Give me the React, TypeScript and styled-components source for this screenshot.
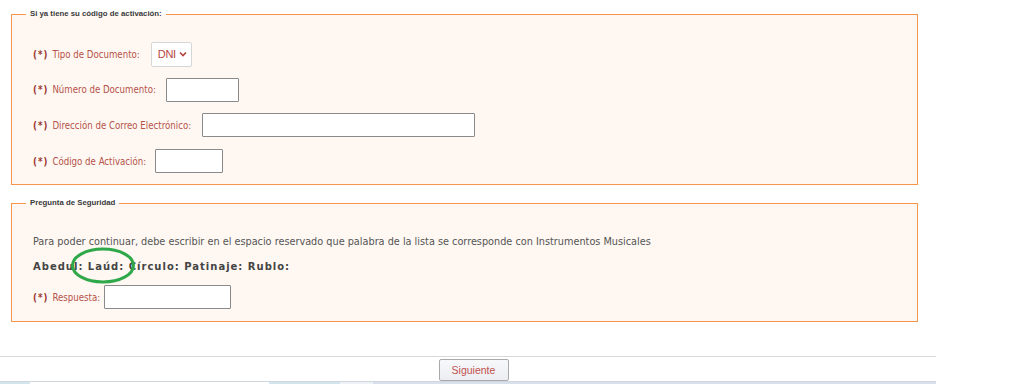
import React from 'react';
import styled, { createGlobalStyle } from 'styled-components';

// global page reset
const GlobalStyle = createGlobalStyle`
  html, body {
    margin: 0;
    padding: 0;
    background: #ffffff;
    overflow: hidden;
  }
  body {
    font-family: "DejaVu Sans Condensed", "DejaVu Sans", sans-serif;
  }
`

const condensed = `
  font-family: "DejaVu Sans Condensed", "DejaVu Sans", Tahoma, sans-serif;
  font-stretch: condensed;
`

// layout
const Page = styled.div`
  width: 936px;
  height: 384px;
  display: flex;
  flex-direction: column;
`
const FormArea = styled.div`
  padding: 9px 0 0 11px;
  display: flex;
  flex-direction: column;
  gap: 13px;
`
const Fieldset = styled.fieldset<{ $pt: number; $pb: number }>`
  width: 907px;
  box-sizing: border-box;
  margin: 0;
  border: 1px solid #f5964f;
  background: #fff8f2;
  padding: ${p => p.$pt}px 0 ${p => p.$pb}px 21px;
  min-inline-size: auto;
`
const Legend = styled.legend`
  margin-left: -7px;
  padding: 0 4px;
  font-family: "Liberation Sans", Arial, sans-serif;
  font-size: 7.8px;
  font-weight: bold;
  color: #3a3a3a;
  line-height: 10px;
`
const Rows = styled.div<{ $gap: number }>`
  display: flex;
  flex-direction: column;
  gap: ${p => p.$gap}px;
`
const Row = styled.div`
  display: flex;
  align-items: center;
  height: 24px;
`
const Label = styled.span<{ $gap: number }>`
  ${condensed}
  font-size: 9.6px;
  color: #b5524a;
  margin-right: ${p => p.$gap}px;
  white-space: nowrap;
`
const Required = styled.b`
  color: #9c3a34;
  letter-spacing: 1px;
  margin-right: 4px;
`
const TextInput = styled.input<{ $w: number }>`
  width: ${p => p.$w}px;
  height: 24px;
  box-sizing: border-box;
  border: 1px solid #8a8a8a;
  border-radius: 1px;
  background: #fff;
  padding: 0 4px;
  outline: none;
`
const SelectBox = styled.div`
  width: 41px;
  height: 25px;
  box-sizing: border-box;
  border: 1px solid #d6d6d6;
  border-radius: 2px;
  background: #fff;
  display: flex;
  align-items: center;
  justify-content: space-between;
  padding: 0 4px 0 6px;
  font-family: "Liberation Sans", Arial, sans-serif;
  font-size: 11px;
  color: #b5443c;
  letter-spacing: -0.3px;
`
const Paragraph = styled.div`
  ${condensed}
  font-size: 10.8px;
  color: #555;
  height: 14px;
  line-height: 14px;
`
const WordList = styled.div`
  position: relative;
  font-family: "DejaVu Sans", Verdana, sans-serif;
  font-size: 10px;
  font-weight: bold;
  color: #444;
  letter-spacing: 1px;
  height: 14px;
  line-height: 14px;
  margin-top: 11px;
`
const Circle = styled.svg`
  position: absolute;
  left: 37px;
  top: -13px;
  pointer-events: none;
`
const AnswerRow = styled(Row)`
  margin-top: 11px;
`
const Footer = styled.div`
  margin-top: 34px;
  border-top: 1px solid #d9d9d9;
  padding: 2px 0 0 11px;
  display: flex;
  justify-content: center;
`
const NextButton = styled.button`
  width: 70px;
  height: 22px;
  border: 1px solid #a9a9a9;
  border-radius: 2px;
  background: linear-gradient(#f7f8fa, #eceef1);
  font-family: "Liberation Sans", Arial, sans-serif;
  font-size: 10.5px;
  color: #c0504d;
  padding: 0;
`
const BottomBar = styled.div`
  display: flex;
  height: 4px;
`
const BarPart = styled.div<{ $w: number; $bg: string }>`
  width: ${p => p.$w}px;
  background: ${p => p.$bg};
  border-top: 1px solid #d0d6de;
  box-sizing: border-box;
`

const Chevron = () => (
  <svg width="8" height="6" viewBox="0 0 8 6">
    <path d="M1 1.5 L4 4.5 L7 1.5" fill="none" stroke="#b5443c" strokeWidth="1.6" />
  </svg>
)

const Field = ({ text, gap, children }: { text: string; gap: number; children: React.ReactNode }) => (
  <Row>
    <Label $gap={gap}><Required>(*)</Required>{text}</Label>
    {children}
  </Row>
)

export default function App() {
  return (
    <Page>
      <GlobalStyle />
      <FormArea>
        <Fieldset $pt={23} $pb={11}>
          <Legend>Si ya tiene su código de activación:</Legend>
          <Rows $gap={11.7}>
            <Field text="Tipo de Documento:" gap={11}>
              <SelectBox>DNI <Chevron /></SelectBox>
            </Field>
            <Field text="Número de Documento:" gap={10}>
              <TextInput $w={73} />
            </Field>
            <Field text="Dirección de Correo Electrónico:" gap={11}>
              <TextInput $w={273} />
            </Field>
            <Field text="Código de Activación:" gap={9}>
              <TextInput $w={68} />
            </Field>
          </Rows>
        </Fieldset>
        <Fieldset $pt={27} $pb={12}>
          <Legend>Pregunta de Seguridad</Legend>
          <Paragraph>
            Para poder continuar, debe escribir en el espacio reservado que palabra de la lista se corresponde con Instrumentos Musicales
          </Paragraph>
          <WordList>
            Abedul: Laúd: Círculo: Patinaje: Rublo:
            <Circle width="66" height="37" viewBox="0 0 66 37">
              <ellipse cx="33" cy="18.5" rx="30.5" ry="16.5" fill="none" stroke="#2fa84a" strokeWidth="3" />
            </Circle>
          </WordList>
          <AnswerRow>
            <Label $gap={4}><Required>(*)</Required>Respuesta:</Label>
            <TextInput $w={127} />
          </AnswerRow>
        </Fieldset>
      </FormArea>
      <Footer>
        <NextButton>Siguiente</NextButton>
      </Footer>
      <BottomBar>
        <BarPart $w={30} $bg="#d5e5ee" />
        <BarPart $w={239} $bg="#ffffff" />
        <BarPart $w={71} $bg="#d5e5ee" />
        <BarPart $w={33} $bg="#eef2f6" />
        <BarPart $w={563} $bg="#d7e0ec" />
      </BottomBar>
    </Page>
  )
}
